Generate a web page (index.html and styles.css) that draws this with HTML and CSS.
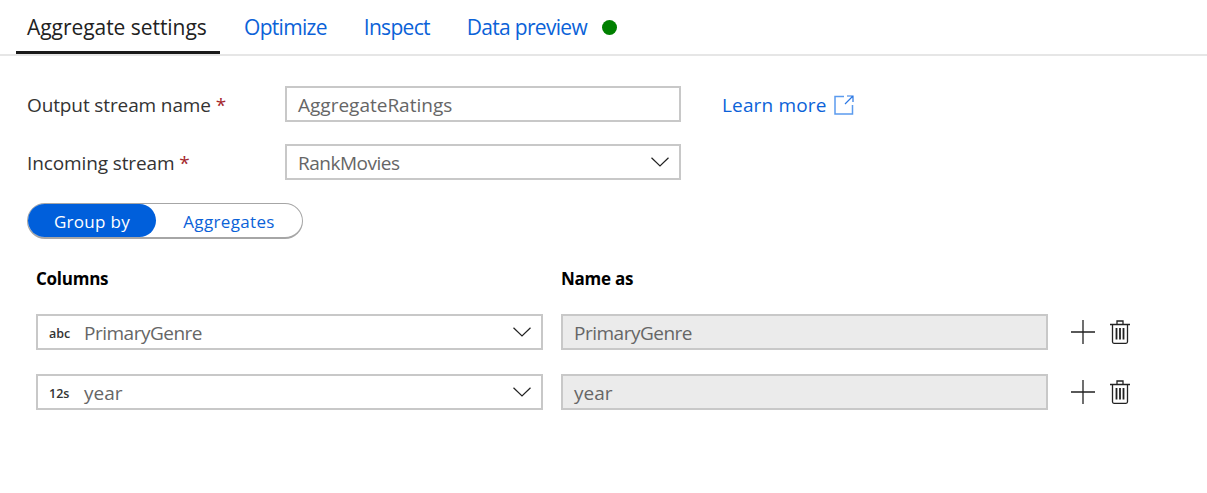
FILE: index.html
```html
<!DOCTYPE html>
<html lang="en">
<head>
  <meta charset="UTF-8">
  <title>Aggregate settings</title>
  <link rel="stylesheet" href="styles.css">
</head>
<body>
  <div class="tabs">
    <div class="tab active">Aggregate settings</div>
    <div class="tab">Optimize</div>
    <div class="tab">Inspect</div>
    <div class="tab">Data preview<span class="status-dot"></span></div>
  </div>

  <div class="form">
    <div class="form-row">
      <label class="form-label">Output stream name <span class="required">*</span></label>
      <div class="field">AggregateRatings</div>
      <a class="learn-more">Learn more
        <svg width="20" height="20" viewBox="0 0 20 20" fill="none" stroke="#5b9bee" stroke-width="1.5">
          <path d="M10 1.500H1v17.500h17.500V10"/>
          <path d="M11 9l7.500-7.500M13 1h6v6" stroke="#2b78e4" stroke-width="1.200" />
        </svg>
      </a>
    </div>
    <div class="form-row">
      <label class="form-label">Incoming stream <span class="required">*</span></label>
      <div class="field select"><span class="narrow">RankMovies</span>
        <svg class="chevron" width="18" height="10" viewBox="0 0 18 10" fill="none" stroke="#222" stroke-width="1.200"><path d="M.5.7L9 9l8.500-8.300"/></svg>
      </div>
    </div>

    <div class="toggle">
      <div class="toggle-item on">Group by</div>
      <div class="toggle-item">Aggregates</div>
    </div>

    <div class="columns">
      <div class="col-head">Columns</div>
      <div class="col-head">Name as</div>
      <div></div>

      <div class="field select"><span class="type">abc</span><span class="narrow">PrimaryGenre</span>
        <svg class="chevron" width="18" height="10" viewBox="0 0 18 10" fill="none" stroke="#222" stroke-width="1.200"><path d="M.5.7L9 9l8.500-8.300"/></svg>
      </div>
      <div class="field disabled"><span class="narrow">PrimaryGenre</span></div>
      <div class="actions">
        <svg width="24" height="24" viewBox="0 0 24 24" stroke="#222" stroke-width="1.300"><path d="M0 12h24M12 0v24"/></svg>
        <svg width="20" height="24" viewBox="0 0 20 24" fill="none" stroke="#222" stroke-width="1.300"><path d="M0 4.500h20M7 4.500V1h6v3.500M2.500 4.500v17.300q0 1.500 1.500 1.500h12q1.500 0 1.500-1.500V4.500"/><path d="M6.500 8v11.500M10 8v11.500M13.500 8v11.500" stroke-width="1.800"/></svg>
      </div>

      <div class="field select"><span class="type num">12s</span>year
        <svg class="chevron" width="18" height="10" viewBox="0 0 18 10" fill="none" stroke="#222" stroke-width="1.200"><path d="M.5.7L9 9l8.500-8.300"/></svg>
      </div>
      <div class="field disabled">year</div>
      <div class="actions">
        <svg width="24" height="24" viewBox="0 0 24 24" stroke="#222" stroke-width="1.300"><path d="M0 12h24M12 0v24"/></svg>
        <svg width="20" height="24" viewBox="0 0 20 24" fill="none" stroke="#222" stroke-width="1.300"><path d="M0 4.500h20M7 4.500V1h6v3.500M2.500 4.500v17.300q0 1.500 1.500 1.500h12q1.500 0 1.500-1.500V4.500"/><path d="M6.500 8v11.500M10 8v11.500M13.500 8v11.500" stroke-width="1.800"/></svg>
      </div>
    </div>
  </div>
</body>
</html>
```

FILE: styles.css
```css
body {
  font-family: "Open Sans", "Noto Sans", Arial, sans-serif;
  font-size: 19px;
  color: #333;
  background-color: #fff;
  margin: 0;
  padding: 0;
}

.tabs {
  display: flex;
  height: 54px;
  padding-left: 16px;
  border-bottom: 2px solid #e6e6e6;
}

.tab {
  display: flex;
  align-items: center;
  height: 54px;
  box-sizing: border-box;
  padding: 0 11px;
  margin-right: 15px;
  font-size: 21px;
  letter-spacing: -0.7px;
  color: #0b62d8;
}

.tab.active {
  width: 204px;
  margin-right: 13px;
  padding-top: 3px;
  letter-spacing: -0.05px;
  white-space: nowrap;
  color: #222;
  border-bottom: 3px solid #1a1a1a;
}

.status-dot {
  width: 15px;
  height: 15px;
  margin-left: 15px;
  border-radius: 50%;
  background-color: #008000;
}

.form {
  padding: 30px 27px 0;
}

.form-row {
  display: flex;
  align-items: center;
  height: 36px;
  margin-bottom: 22px;
}

.form-label {
  width: 258px;
  padding-top: 2px;
  letter-spacing: -0.12px;
  color: #333;
}

.required {
  color: #a4262c;
}

.field {
  display: flex;
  align-items: center;
  box-sizing: border-box;
  height: 36px;
  padding: 2px 0 0 11px;
  border: 2px solid #c8c8c8;
  color: #666;
}

.form-row .field {
  width: 396px;
}

.narrow {
  letter-spacing: -0.5px;
}

.select {
  position: relative;
}

.chevron {
  position: absolute;
  right: 10px;
  top: 11px;
}

.learn-more {
  display: flex;
  align-items: center;
  gap: 8px;
  margin-left: 41px;
  padding-top: 1px;
  letter-spacing: 0.15px;
  color: #0b62d8;
}

.toggle {
  display: flex;
  box-sizing: border-box;
  width: 276px;
  height: 36px;
  margin-top: 23px;
  border: 1px solid #a6a6a6;
  border-bottom-width: 2px;
  border-radius: 18px;
  font-size: 17px;
  letter-spacing: 0.35px;
  color: #0b62d8;
}

.toggle-item {
  display: flex;
  align-items: center;
  justify-content: center;
  flex: 1;
  padding-top: 1px;
}

.toggle-item.on {
  flex: none;
  width: 128px;
  letter-spacing: 0.3px;
  color: #fff;
  background-color: #005fdb;
  border-radius: 17px;
}

.columns {
  display: grid;
  grid-template-columns: 507px 487px auto;
  column-gap: 18px;
  row-gap: 24px;
  align-items: center;
  margin: 28px 0 0 9px;
}

.col-head {
  font-size: 17px;
  font-weight: 700;
  letter-spacing: -0.25px;
  color: #000;
}

.type {
  width: 35px;
  font-size: 12.5px;
  font-weight: 600;
  color: #333;
}

.disabled {
  background-color: #ebebeb;
}

.actions {
  display: flex;
  align-items: center;
  gap: 15px;
  margin-left: 5px;
}
```
